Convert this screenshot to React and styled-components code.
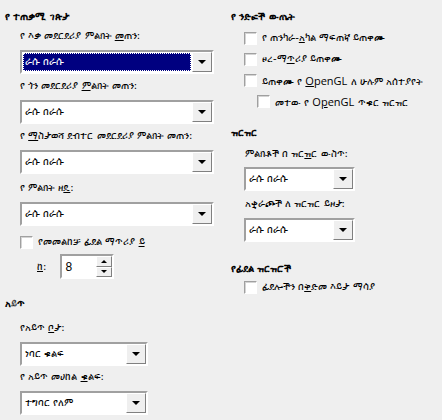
import React from "react";
import styled, { createGlobalStyle } from "styled-components";

const Global = createGlobalStyle`
  html, body {
    margin: 0;
    padding: 0;
    background: #efefef;
  }
  body {
    font-family: "DejaVu Sans", "Noto Sans", sans-serif;
    font-size: 10px;
    color: #000;
  }
`;

const Page = styled.div`
  width: 442px;
  height: 420px;
  display: grid;
  grid-template-columns: 221px 1fr;
  column-gap: 5px;
  padding: 10px 0 0 5px;
  box-sizing: border-box;
`;

const Column = styled.div`
  display: flex;
  flex-direction: column;
`;

const Heading = styled.div`
  font-weight: bold;
  height: 14px;
  line-height: 14px;
  margin-top: ${(p) => p.$top || 0}px;
`;

const Label = styled.div`
  height: 14px;
  line-height: 14px;
  margin: ${(p) => p.$top ?? 5}px 0 0 ${(p) => p.$indent || 15}px;
  white-space: nowrap;
`;

const Combo = styled.div`
  width: ${(p) => p.$w}px;
  height: 24px;
  margin: ${(p) => p.$top ?? 7}px 0 0 ${(p) => p.$indent || 15}px;
  box-sizing: border-box;
  border: 2px solid;
  border-color: #a0a0a0 #fff #fff #a0a0a0;
  background: #fff;
  display: flex;
  align-items: stretch;
`;

const ComboText = styled.div`
  flex: 1;
  display: flex;
  align-items: center;
  padding-left: 2px;
  margin: 1px;
  box-sizing: border-box;
  ${(p) =>
    p.$focus &&
    `
    background: #000080;
    color: #fff;
    outline: 1px dotted #fff;
    outline-offset: -1px;
  `}
`;

const DropButton = styled.div`
  width: 18px;
  background: #efefef;
  border: 1px solid;
  border-color: #fff #808080 #808080 #fff;
  display: flex;
  align-items: center;
  justify-content: center;
`;

const Arrow = styled.span`
  width: 0;
  height: 0;
  border-left: 4px solid transparent;
  border-right: 4px solid transparent;
  border-top: 4px solid #000;
`;

const CheckRow = styled.div`
  display: flex;
  align-items: center;
  gap: 5px;
  height: 14px;
  margin: ${(p) => p.$top ?? 7}px 0 0 ${(p) => p.$indent || 13}px;
  white-space: nowrap;
`;

const Box = styled.span`
  width: 13px;
  height: 13px;
  box-sizing: border-box;
  border: 1px solid;
  border-color: #a0a0a0 #fff #fff #a0a0a0;
  background: #fff;
  box-shadow: inset 1px 1px 0 #d4d4d4;
  flex: none;
`;

const SpinRow = styled.div`
  display: flex;
  align-items: center;
  gap: 14px;
  margin: 5px 0 0 32px;
`;

const Spin = styled.div`
  width: 54px;
  height: 25px;
  box-sizing: border-box;
  border: 2px solid;
  border-color: #a0a0a0 #fff #fff #a0a0a0;
  background: #fff;
  display: flex;
  font-family: "Liberation Sans", sans-serif;
  font-size: 12px;
`;

const SpinValue = styled.div`
  flex: 1;
  display: flex;
  align-items: center;
  padding-left: 3px;
`;

const SpinButtons = styled.div`
  width: 16px;
  display: flex;
  flex-direction: column;
`;

const SpinButton = styled.div`
  flex: 1;
  background: #efefef;
  border: 1px solid;
  border-color: #fff #808080 #808080 #fff;
  display: flex;
  align-items: center;
  justify-content: center;
`;

const Tri = styled.span`
  width: 0;
  height: 0;
  border-left: 3px solid transparent;
  border-right: 3px solid transparent;
  ${(p) => (p.$up ? "border-bottom: 3px solid #000;" : "border-top: 3px solid #000;")}
`;

const Latin = styled.span`
  font-family: "Open Sans", "DejaVu Sans", sans-serif;
  font-size: 11px;
`;

const Select = ({ value, w, top, indent, focus }) => (
  <Combo $w={w} $top={top} $indent={indent}>
    <ComboText $focus={focus}>{value}</ComboText>
    <DropButton>
      <Arrow />
    </DropButton>
  </Combo>
);

const Check = ({ children, top, indent }) => (
  <CheckRow $top={top} $indent={indent}>
    <Box />
    <span>{children}</span>
  </CheckRow>
);

export default function App() {
  return (
    <>
      <Global />
      <Page>
        <Column>
          <Heading>የ ተጠቃሚ ገጽታ</Heading>
          <Label>
            የ እቃ መደርደሪያ ምልክት <u>መ</u>ጠን:
          </Label>
          <Select value="ራሱ በራሱ" w={194} focus />
          <Label>
            የ ጎን መደርደሪያ <u>ም</u>ልክት መጠን:
          </Label>
          <Select value="ራሱ በራሱ" w={194} />
          <Label>
            የ <u>ማ</u>ስታወሻ ደብተር መደርደሪያ ምልክት መጠን:
          </Label>
          <Select value="ራሱ በራሱ" w={194} />
          <Label $top={7}>
            የ ምልክት ዘ<u>ዴ</u>:
          </Label>
          <Select value="ራሱ በራሱ" w={194} />
          <Check top={9} indent={15}>
            የመመልከቻ ፊደል ማጥሪያ <u>ይ</u>
          </Check>
          <SpinRow>
            <span>
              <u>ከ</u>:
            </span>
            <Spin>
              <SpinValue>8</SpinValue>
              <SpinButtons>
                <SpinButton>
                  <Tri $up />
                </SpinButton>
                <SpinButton>
                  <Tri />
                </SpinButton>
              </SpinButtons>
            </Spin>
          </SpinRow>
          <Heading $top={18}>አይጥ</Heading>
          <Label $top={10}>
            የአይጥ <u>ቦ</u>ታ:
          </Label>
          <Select value="ነባር ቁልፍ" w={128} />
          <Label $top={4}>
            የ አይጥ መሀከል <u>ቁ</u>ልፍ:
          </Label>
          <Select value="ተግባር የለም" w={128} />
        </Column>
        <Column>
          <Heading>የ ንድፎች ውጤት</Heading>
          <Check top={7}>
            የ ጠንካራ-<u>አ</u>ካል ማፍጠኛ ይጠቀሙ
          </Check>
          <Check>
            ፀረ-ማ<u>ጥ</u>ሪያ ይጠቀሙ
          </Check>
          <Check>
            ይጠቀሙ የ <Latin><u>O</u>penGL</Latin> ለ ሁሉም አሰተያየት
          </Check>
          <Check indent={26}>
            መተው የ <Latin>O<u>p</u>enGL</Latin> ጥቁር ዝርዝር
          </Check>
          <Heading $top={18}>ዝርዝር</Heading>
          <Label $top={7} $indent={14}>
            ምልክቶች በ ዝር<u>ዝ</u>ር ውስጥ:
          </Label>
          <Select value="ራሱ በራሱ" w={111} indent={13} top={6} />
          <Label $top={6} $indent={14}>
            አቋራጮች ለ ዝርዝር ይዞታ:
          </Label>
          <Select value="ራሱ በራሱ" w={111} indent={13} />
          <Heading $top={20}>የፊደል ዝርዝሮች</Heading>
          <Check top={4}>
            ፊደሎችን በ<u>ቅ</u>ድመ እይታ ማሳያ
          </Check>
        </Column>
      </Page>
    </>
  );
}
